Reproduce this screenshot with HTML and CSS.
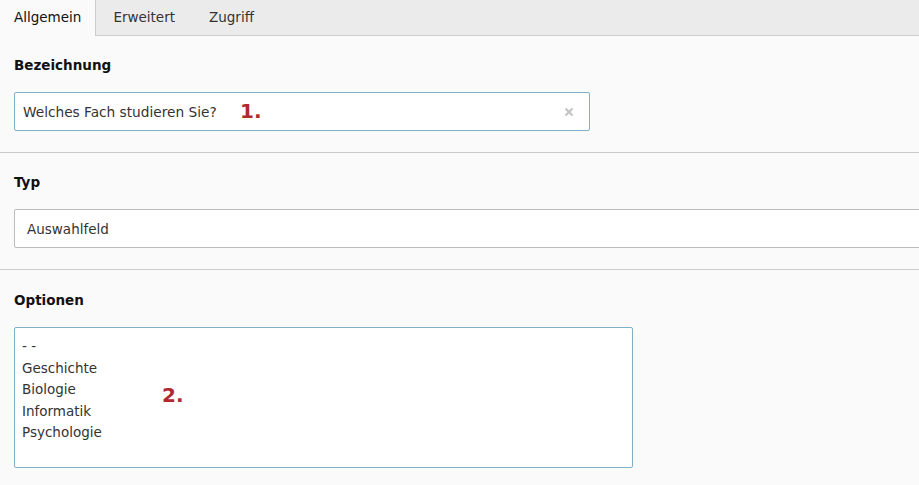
FILE: index.html
```html
<!DOCTYPE html>
<html lang="de">
<head>
<meta charset="utf-8">
<title>Formular</title>
<link rel="stylesheet" href="styles.css">
</head>
<body>
<div class="tabs">
  <div class="tab active">Allgemein</div>
  <div class="tab">Erweitert</div>
  <div class="tab">Zugriff</div>
</div>

<div class="field">
  <div class="label">Bezeichnung</div>
  <div class="input-wrap">
    <div class="input">
      <span class="value">Welches Fach studieren Sie?</span>
      <svg class="clear" width="10" height="10" viewBox="0 0 10 10"><path d="M1.5 1.5L8.5 8.5M8.5 1.5L1.5 8.5" stroke="#c2c2c2" stroke-width="2" stroke-linecap="butt"/></svg>
    </div>
    <span class="mark mark-1">1.</span>
  </div>
</div>

<div class="field clip">
  <div class="label">Typ</div>
  <div class="select">Auswahlfeld</div>
</div>

<div class="field last">
  <div class="label">Optionen</div>
  <div class="input-wrap">
    <div class="textarea">
      <div>- -</div>
      <div>Geschichte</div>
      <div>Biologie</div>
      <div>Informatik</div>
      <div>Psychologie</div>
    </div>
    <span class="mark mark-2">2.</span>
  </div>
</div>
</body>
</html>
```

FILE: styles.css
```css
html, body {
  margin: 0;
  padding: 0;
  background: #fafafa;
  overflow: hidden;
}
body {
  font-family: "DejaVu Sans", Verdana, sans-serif;
  font-size: 13.5px;
  color: #333;
}
.tabs {
  display: flex;
  height: 35px;
  background: #ebebeb;
  border-bottom: 1px solid #cccccc;
}
.tab {
  line-height: 35px;
  padding: 0 17px;
  color: #333;
}
.tab.active {
  background: #fafafa;
  color: #111;
  padding: 0 14px 0 14px;
  border-right: 1px solid #cccccc;
  height: 36px;
  margin-bottom: -1px;
}
.tab.active + .tab {
  padding-left: 17px;
}
.field {
  padding: 19px 14px 21px;
  border-bottom: 1px solid #cacaca;
}
.field.clip {
  overflow: hidden;
}
.field.last {
  border-bottom: none;
  padding-top: 20px;
}
.label {
  font-weight: bold;
  color: #111;
  line-height: 20px;
  margin-bottom: 17px;
}
.input-wrap {
  position: relative;
}
.input {
  box-sizing: border-box;
  width: 576px;
  height: 39px;
  background: #fff;
  border: 1px solid #7eb1c6;
  border-radius: 2px;
  display: flex;
  align-items: center;
  padding: 0 15px 0 8px;
  justify-content: space-between;
}
.value {
  font-size: 13.7px;
  color: #333;
}
.clear {
  display: block;
}
.select {
  box-sizing: border-box;
  width: calc(100% + 30px);
  height: 39px;
  background: #fff;
  border: 1px solid #bcbcbc;
  border-radius: 2px;
  display: flex;
  align-items: center;
  padding: 0 12px;
  color: #333;
}
.textarea {
  box-sizing: border-box;
  width: 619px;
  height: 141px;
  background: #fff;
  border: 1px solid #7eb1c6;
  border-radius: 2px;
  padding: 8px 7px;
  line-height: 21.6px;
  color: #333;
}
.mark {
  position: absolute;
  font-weight: bold;
  font-size: 20px;
  color: #b1282e;
  line-height: 1;
}
.mark-1 {
  left: 226px;
  top: 9px;
}
.mark-2 {
  left: 148px;
  top: 58px;
}
```
